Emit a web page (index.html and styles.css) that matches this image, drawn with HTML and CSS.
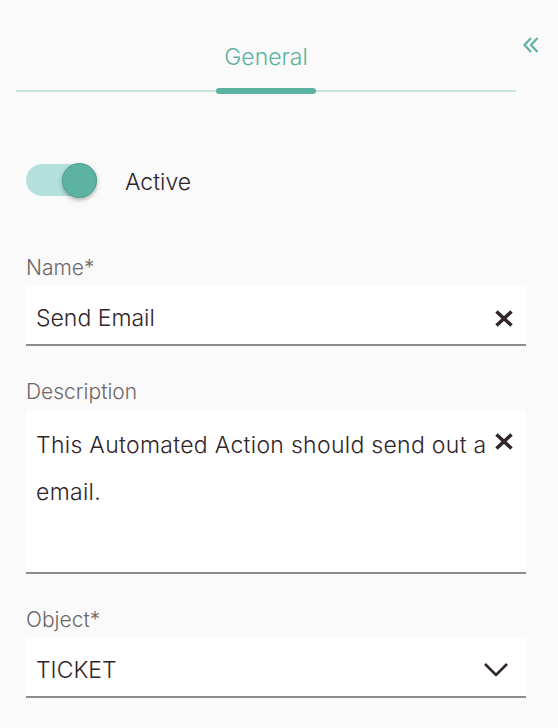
FILE: index.html
```html
<!doctype html>
<html lang="en">
    <head>
        <meta charset="UTF-8" />
        <meta name="viewport" content="width=device-width, initial-scale=1.0" />
        <title>Automated Action - General</title>
        <link rel="stylesheet" href="styles.css">
    </head>
    <body>
        <div class="panel">
            <div class="panel-header">
                <div class="tabs">
                    <div class="tab-label">General</div>
                    <div class="tab-track">
                        <div class="tab-indicator"></div>
                    </div>
                </div>
                <svg class="collapse-icon" width="18" height="18" viewBox="0 0 18 18">
                    <path d="M9 2 L2.5 9 L9 16 M15.5 2 L9 9 L15.5 16" fill="none" stroke="#5db3a2" stroke-width="2.2" />
                </svg>
            </div>

            <div class="form">
                <div class="toggle-row">
                    <div class="switch-track">
                        <div class="switch-knob"></div>
                    </div>
                    <span class="toggle-label">Active</span>
                </div>

                <div class="field">
                    <div class="field-label">Name*</div>
                    <div class="input">
                        <span class="input-value">Send Email</span>
                        <svg class="clear-icon" width="20" height="19" viewBox="0 0 20 19">
                            <path d="M2.5 2.5 L17.5 16.5 M17.5 2.5 L2.5 16.5" fill="none" stroke="#2f252b" stroke-width="3.6" />
                        </svg>
                    </div>
                </div>

                <div class="field">
                    <div class="field-label">Description</div>
                    <div class="input textarea">
                        <span class="input-value">This Automated Action should send out a email.</span>
                        <svg class="clear-icon" width="20" height="19" viewBox="0 0 20 19">
                            <path d="M2.5 2.5 L17.5 16.5 M17.5 2.5 L2.5 16.5" fill="none" stroke="#2f252b" stroke-width="3.6" />
                        </svg>
                    </div>
                </div>

                <div class="field">
                    <div class="field-label">Object*</div>
                    <div class="input select">
                        <span class="input-value">TICKET</span>
                        <svg class="chevron-icon" width="26" height="16" viewBox="0 0 26 16">
                            <path d="M2 2 L13 13 L24 2" fill="none" stroke="#2f252b" stroke-width="2.6" />
                        </svg>
                    </div>
                </div>
            </div>
        </div>
    </body>
</html>
```

FILE: styles.css
```css
* {
    margin: 0;
    padding: 0;
    box-sizing: border-box;
}
body {
    font-family: Inter, "Noto Sans", sans-serif;
    font-weight: 300;
    background-color: #fafafa;
    color: #2f252b;
    width: 558px;
    min-height: 728px;
}
.panel-header {
    display: flex;
    align-items: flex-start;
}
.tabs {
    margin-left: 16px;
    width: 500px;
    padding-top: 43px;
}
.tab-label {
    text-align: center;
    font-size: 23px;
    line-height: 28px;
    color: #5db3a2;
}
.tab-track {
    margin-top: 19px;
    height: 2px;
    background-color: #c4e5de;
    display: flex;
    justify-content: center;
    align-items: center;
}
.tab-indicator {
    width: 100px;
    height: 6px;
    flex-shrink: 0;
    border-radius: 3px;
    background-color: #5db3a2;
}
.collapse-icon {
    margin-left: 6px;
    margin-top: 36px;
}
.form {
    padding-left: 26px;
    width: 526px;
}
.toggle-row {
    margin-top: 70px;
    height: 36px;
    display: flex;
    align-items: center;
}
.switch-track {
    width: 71px;
    height: 32px;
    border-radius: 16px;
    background-color: #b5e1dc;
    display: flex;
    align-items: center;
    justify-content: flex-end;
}
.switch-knob {
    width: 35px;
    height: 35px;
    flex-shrink: 0;
    border-radius: 50%;
    background-color: #5db3a2;
    border: 1px solid #4f9f8f;
    box-shadow: 0 2px 4px rgba(0, 0, 0, 0.3);
}
.toggle-label {
    margin-left: 28px;
    font-size: 23px;
    line-height: 26px;
    padding-top: 4px;
}
.field {
    margin-top: 34px;
}
.toggle-row + .field {
    margin-top: 58px;
}
.field-label {
    font-size: 21px;
    line-height: 24px;
    color: #6e6669;
    margin-bottom: 6px;
}
.input {
    height: 60px;
    background-color: #ffffff;
    border-radius: 4px 4px 0 0;
    border-bottom: 2px solid #8e898b;
    padding: 6px 12px 0 10px;
    display: flex;
    align-items: center;
    justify-content: space-between;
}
.input-value {
    font-size: 23px;
    line-height: 26px;
}
.textarea {
    height: 164px;
    padding-top: 12px;
    align-items: flex-start;
}
.textarea .input-value {
    line-height: 47px;
    width: 456px;
    letter-spacing: 0.3px;
}
.textarea .clear-icon {
    margin-top: 10px;
}
.select {
    padding-right: 17px;
}
```
